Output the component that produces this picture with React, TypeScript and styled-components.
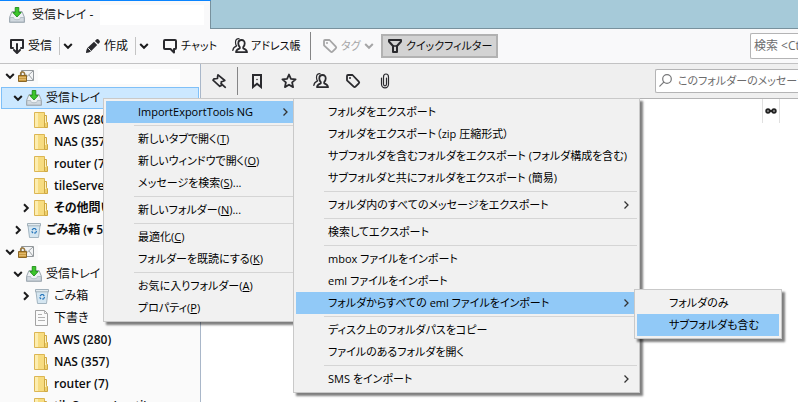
import React from "react";
import styled, { createGlobalStyle, css } from "styled-components";

const GlobalStyle = createGlobalStyle`
  * { box-sizing: border-box; }
  html, body, #root { height: 100%; }
  body {
    margin: 0;
    overflow: hidden;
    background: #fff;
    color: #0c0c0d;
    font-family: "Open Sans", "Noto Sans CJK JP", sans-serif;
    font-size: 12px;
    line-height: 16px;
    font-feature-settings: "palt";
  }
  button, input { font: inherit; font-feature-settings: inherit; color: inherit; }
  button { background: none; border: 0; padding: 0; white-space: nowrap; }
  ul { list-style: none; margin: 0; padding: 0; }
  svg { display: block; flex: none; }
`;

const Window = styled.div`
  display: flex;
  flex-direction: column;
  height: 100%;
  overflow: hidden;
`;

const TabStrip = styled.div`
  display: flex;
  height: 29px;
  background: #a6cad9;
`;

const Tab = styled.button`
  display: flex;
  align-items: center;
  gap: 7px;
  width: 211px;
  padding: 0 6px 0 9px;
  background: #f9f9fa;
  border-top: 1px solid #0a84ff;
  border-right: 1px solid #78919d;
`;

const TabStripRest = styled.div`
  flex: 1;
  border-bottom: 1px solid #78919d;
`;

const Blank = styled.span<{ $tall?: boolean }>`
  flex: 1;
  height: ${(p) => (p.$tall ? 20 : 15)}px;
  background: #fff;
`;

const Toolbar = styled.div`
  display: flex;
  align-items: center;
  height: 35px;
  padding-left: 9px;
  background: #f9f9fa;
  border-bottom: 1px solid #c2c2c3;
`;

const ToolButton = styled.button<{ $w: number; $dim?: boolean; $small?: boolean }>`
  display: flex;
  align-items: center;
  gap: 3px;
  width: ${(p) => p.$w}px;
  height: 24px;
  flex: none;
  ${(p) => p.$small && css`font-size: 11px;`}
  ${(p) => p.$dim && css`color: #a5a5a6;`}
`;

const ToggleButton = styled.button`
  display: flex;
  align-items: center;
  gap: 3px;
  flex: none;
  height: 24px;
  padding: 0 4px;
  font-size: 11px;
  background: #d3d3d3;
  border: 2px solid #b2b2b2;
`;

const Divider = styled.span<{ $tall?: boolean; $gap: number }>`
  flex: none;
  width: 1px;
  height: ${(p) => (p.$tall ? 28 : 18)}px;
  margin-right: ${(p) => p.$gap}px;
  background: ${(p) => (p.$tall ? "#858586" : "#c4c4c4")};
`;

const SearchBox = styled.label<{ $w: number; $small?: boolean }>`
  display: flex;
  align-items: center;
  gap: 3px;
  flex: none;
  width: ${(p) => p.$w}px;
  height: ${(p) => (p.$small ? 24 : 26)}px;
  margin-left: auto;
  padding-left: 3px;
  font-size: ${(p) => (p.$small ? 11 : 12)}px;
  background: #fff;
  border: 1px solid #b4b4b5;
  border-right: 0;
  border-radius: 2px 0 0 2px;
  input {
    flex: 1;
    min-width: 0;
    padding: 0;
    border: 0;
    outline: 0;
    background: none;
  }
  input::placeholder { color: #6c6c6d; opacity: 1; }
`;

const Panes = styled.div`
  display: flex;
  flex: 1;
  min-height: 0;
`;

const Tree = styled.ul`
  flex: none;
  width: 201px;
  padding: 1px 1px 0 1px;
  overflow: hidden;
  background: #fafafa;
  border-right: 1px solid #a9b7c9;
`;

const TreeRow = styled.button<{ $level: number; $bold?: boolean; $selected?: boolean }>`
  display: flex;
  align-items: center;
  width: 198px;
  height: 22px;
  padding-left: ${(p) => 2 + p.$level * 8}px;
  padding-right: 18px;
  font-weight: ${(p) => (p.$bold ? 600 : 400)};
  border: 1px solid ${(p) => (p.$selected ? "#7fc0f8" : "transparent")};
  background: ${(p) => (p.$selected ? "#cce8ff" : "transparent")};
`;

const Twisty = styled.span`
  display: flex;
  justify-content: center;
  flex: none;
  width: 12px;
  margin-right: 2px;
`;

const TreeIcon = styled.span`
  flex: none;
  width: 16px;
  margin-right: 4px;
`;

const Content = styled.main`
  flex: 1;
  min-width: 0;
`;

const FilterBar = styled.div`
  display: flex;
  align-items: center;
  height: 35px;
  padding-left: 10px;
  background: #efefef;
  border-bottom: 1px solid #b3b3b4;
`;

const FilterIcons = styled.div`
  display: flex;
  gap: 16px;
`;

const ColumnHeader = styled.div`
  display: flex;
  justify-content: flex-end;
  height: 24px;
  padding-right: 18px;
`;

const ThreadColumn = styled.button`
  display: flex;
  align-items: center;
  justify-content: center;
  width: 18px;
  border-left: 1px solid #e0e0e0;
  border-right: 1px solid #e0e0e0;
`;

const MenuList = styled.ul<{ $w: number }>`
  position: absolute;
  z-index: 1;
  width: ${(p) => p.$w}px;
  padding: 2px;
  font-size: 11px;
  background: #f1f1f1;
  border: 1px solid #c9c9c9;
  box-shadow: 3px 3px 2px rgba(0, 0, 0, 0.5);
`;

const ContextMenu = styled(MenuList)`
  left: 103px;
  top: 98px;
`;

const SubMenu = styled(MenuList)`
  left: calc(100% - 3px);
  top: -3px;
`;

const MenuItem = styled.li`
  position: relative;
`;

const MenuButton = styled.button<{ $active?: boolean }>`
  display: flex;
  align-items: center;
  justify-content: space-between;
  width: 100%;
  height: 22px;
  padding: 0 6px 0 32px;
  color: #000;
  background: ${(p) => (p.$active ? "#91c9f7" : "transparent")};
`;

const Separator = styled.li`
  height: 5px;
  padding: 2px 0 2px 28px;
  &::before {
    content: "";
    display: block;
    height: 1px;
    background: #d5d5d5;
  }
`;

const Chevron = ({ dir = "down", color = "#1b1b1c", thin = false }: { dir?: "down" | "right"; color?: string; thin?: boolean }) => (
  <svg width="10" height="10" viewBox="0 0 10 10" fill="none" stroke={color} strokeWidth={thin ? 1.3 : 2}>
    <path d={dir === "down" ? "M1.2 3 5 6.8 8.8 3" : thin ? "M3.5 1.5 7 5 3.5 8.5" : "M3 1.2 6.8 5 3 8.8"} />
  </svg>
);

const Glyph = ({ children, color = "#2a2a2e" }: { children: React.ReactNode; color?: string }) => (
  <svg width="16" height="16" viewBox="0 0 16 16" fill="none" stroke={color} strokeWidth="2" strokeLinejoin="round" strokeLinecap="round">
    {children}
  </svg>
);

const GetMailIcon = () => (
  <Glyph>
    <path d="M4 10H2V2h12v8h-2M8 6v8.500M5 12l3 3 3-3" />
  </Glyph>
);
const PencilIcon = () => (
  <Glyph>
    <path stroke="none" fill="#2a2a2e" d="M1 15c0-2 .7-4 1.6-5.200L9 3.800 12.200 7 6 13.300C4.700 14.300 3 15 1 15ZM9.900 2.900l1.200-1.200c.8-.8 1.800-.8 2.500-.1l.8.800c.7.700.7 1.700-.1 2.500L13.100 6.100Z" />
    <path stroke="#f9f9fa" strokeWidth="1" d="m3.500 10.500 2 2" />
  </Glyph>
);
const ChatIcon = () => (
  <Glyph>
    <path d="M3 2h10a1 1 0 0 1 1 1v7a1 1 0 0 1-1 1h-1v3.500L8.500 11H3a1 1 0 0 1-1-1V3a1 1 0 0 1 1-1Z" />
  </Glyph>
);
const PeopleIcon = () => (
  <Glyph>
    <path strokeWidth="1.800" d="M9.500 2C7.300 2 6.300 3.600 6.300 5.500c0 1.600.7 2.800 1.500 3.600v1.200c-2 .5-3.500 1.400-3.800 3.900h11c-.3-2.500-1.800-3.400-3.800-3.900V9.100c.8-.8 1.500-2 1.500-3.600C12.700 3.600 11.700 2 9.500 2Z" />
    <path strokeWidth="1.200" d="M7 .7C4.500.7 3.500 2.500 3.500 4.500c0 1.500.5 2.600 1.100 3.400C2.500 8.800 1 10 .8 12.500" />
  </Glyph>
);
const TagIcon = ({ color }: { color?: string }) => (
  <Glyph color={color}>
    <path strokeWidth="1.800" d="M2 3v4.300L8.700 13.700a1.300 1.300 0 0 0 1.800 0l3.300-3.300a1.300 1.300 0 0 0 0-1.800L7.500 2H3a1 1 0 0 0-1 1Z" />
    <circle cx="5" cy="5" r="1" stroke="none" fill={color ?? "#2a2a2e"} />
  </Glyph>
);
const FunnelIcon = () => (
  <Glyph>
    <path d="M2 2h12v1.500L10 8v6H6V8L2 3.500Z" />
    <path d="M6 8h4" strokeWidth="1.500" />
  </Glyph>
);
const PinIcon = () => (
  <Glyph>
    <path strokeWidth="1.700" d="M7 1.800 13.800 7.500 12 8.300 10.300 8.800 10.300 12.500 8.800 13.300 2 7.200 3 5.800 6.500 5.500 6.600 3.500ZM10 10.500 14.300 14.300" />
  </Glyph>
);
const BookmarkIcon = () => (
  <Glyph>
    <path strokeLinejoin="miter" d="M4 2h8v12l-4-3.300L4 14Z" />
    <path strokeWidth="1.500" d="M8 6.500v.1" />
  </Glyph>
);
const StarIcon = () => (
  <Glyph>
    <path strokeWidth="1.800" d="m8 1.500 1.900 4.300 4.700.5-3.500 3.100 1 4.700L8 11.700l-4.100 2.400 1-4.700L1.400 6.300l4.700-.5Z" />
  </Glyph>
);
const ClipIcon = () => (
  <Glyph>
    <path strokeWidth="1.200" d="M4.500 5v6a3.500 3.900 0 0 0 7 0V4a2.500 3 0 0 0-5 0v7a1.500 1.800 0 0 0 3 0V5" />
  </Glyph>
);
const SearchIcon = () => (
  <Glyph color="#77787a">
    <circle cx="8" cy="6" r="4.300" strokeWidth="1.200" />
    <path strokeWidth="1.200" d="m4.800 9.200-4 4" />
  </Glyph>
);

const InboxIcon = () => (
  <svg width="16" height="16" viewBox="0 0 16 16">
    <path d="M3 4.500h10l2.500 6v4.800H.5v-4.800Z" fill="#edf1f4" stroke="#9aa5ad" />
    <path d="M.9 10.500h3.600c0 3 7 3 7 0h3.600v4.300H.9Z" fill="#d1d9df" stroke="#a4afb7" strokeWidth=".7" />
    <path d="M6.200 .5h3.600v5h2.400L8 10 3.800 5.500h2.400Z" fill="#3cc52c" stroke="#13850e" strokeWidth=".8" />
  </svg>
);
const FolderIcon = () => (
  <svg width="16" height="16" viewBox="0 0 16 16">
    <path d="M.5.5h10v15H.5Z" fill="#f7dc80" stroke="#dcb653" />
    <path d="M10.500 3.500h2v6l1 1v5h-3Z" fill="#eed06c" stroke="#cfa843" />
    <path d="M1 1h3v14H1Z" fill="#fcedb0" />
    <path d="M11.500 4v7" stroke="#fff3bd" />
  </svg>
);
const AccountIcon = () => (
  <svg width="16" height="16" viewBox="0 0 16 16">
    <path d="M3.500 2.500h12v10h-12Z" fill="#f3f4f5" stroke="#92979b" />
    <path d="m4 3 5.500 5L15 3M8 7l-4 5M11 7l4 5" fill="none" stroke="#92979b" strokeWidth=".9" />
    <path d="M2.500 8V6a2 2 0 0 1 4 0v2" fill="none" stroke="#9a783c" strokeWidth="1.300" />
    <path d="M.5 7.500h8v6h-8Z" fill="#c99a40" stroke="#8b6625" />
    <path d="M1 9.500h7M1 11.500h7" stroke="#e7c277" strokeWidth=".8" />
  </svg>
);
const TrashIcon = () => (
  <svg width="16" height="16" viewBox="0 0 16 16">
    <path d="M1.800 2h12.400l-1.700 13.500h-9Z" fill="#d5e6f1" stroke="#a3b5c1" />
    <path d="M1.500 1.500h13v2.300h-13Z" fill="#e3ebf0" stroke="#93a3ae" strokeWidth=".8" />
    <path d="m6 8 1.500-1.500H9L10.300 8M10.600 9l-1 2H8M7 11 5.600 9.300" fill="none" stroke="#2877bc" strokeWidth="1.200" />
  </svg>
);
const DraftIcon = () => (
  <svg width="16" height="16" viewBox="0 0 16 16">
    <path d="M1.500.5h9l3 3v12h-12Z" fill="#fafafa" stroke="#a2a2a2" />
    <path d="M10.500.5v3h3M4 4.500h4M4 7.500h7M4 10.500h7" fill="none" stroke="#b2b2b2" />
  </svg>
);
const ThreadIcon = () => (
  <svg width="12" height="8" viewBox="0 0 12 8" fill="none" stroke="#222" strokeWidth="2">
    <circle cx="3" cy="4" r="1.700" />
    <circle cx="9" cy="4" r="1.700" />
    <path d="M4.500 4h3" />
  </svg>
);

const icons = { account: AccountIcon, inbox: InboxIcon, folder: FolderIcon, trash: TrashIcon, draft: DraftIcon };

type Row = {
  icon: keyof typeof icons;
  level: number;
  label?: string;
  open?: boolean;
  bold?: boolean;
  selected?: boolean;
};

const rows: Row[] = [
  { icon: "account", level: 0, open: true },
  { icon: "inbox", level: 1, label: "受信トレイ", open: true, selected: true },
  { icon: "folder", level: 2, label: "AWS (280)", bold: true },
  { icon: "folder", level: 2, label: "NAS (357)", bold: true },
  { icon: "folder", level: 2, label: "router (7)", bold: true },
  { icon: "folder", level: 2, label: "tileServer", bold: true },
  { icon: "folder", level: 2, label: "その他問い", open: false, bold: true },
  { icon: "trash", level: 1, label: "ごみ箱 (▾ 5", open: false, bold: true },
  { icon: "account", level: 0, open: true },
  { icon: "inbox", level: 1, label: "受信トレイ", open: true },
  { icon: "trash", level: 2, label: "ごみ箱", open: false },
  { icon: "draft", level: 2, label: "下書き" },
  { icon: "folder", level: 2, label: "AWS (280)", bold: true },
  { icon: "folder", level: 2, label: "NAS (357)", bold: true },
  { icon: "folder", level: 2, label: "router (7)", bold: true },
  { icon: "folder", level: 2, label: "tileServer (cacti)", bold: true },
];

type Entry = null | { text: string; accessKey?: string; tail?: string; arrow?: boolean; sub?: Entry[]; subWidth?: number };

const importMenu: Entry[] = [{ text: "フォルダのみ" }, { text: "サブフォルダも含む" }];

const toolsMenu: Entry[] = [
  { text: "フォルダをエクスポート" },
  { text: "フォルダをエクスポート（zip 圧縮形式）" },
  { text: "サブフォルダを含むフォルダをエクスポート (フォルダ構成を含む)" },
  { text: "サブフォルダと共にフォルダをエクスポート (簡易)" },
  null,
  { text: "フォルダ内のすべてのメッセージをエクスポート", arrow: true },
  null,
  { text: "検索してエクスポート" },
  null,
  { text: "mbox ファイルをインポート" },
  { text: "eml ファイルをインポート" },
  { text: "フォルダからすべての eml ファイルをインポート", arrow: true, sub: importMenu, subWidth: 148 },
  null,
  { text: "ディスク上のフォルダパスをコピー" },
  { text: "ファイルのあるフォルダを開く" },
  null,
  { text: "SMS をインポート", arrow: true },
];

const folderMenu: Entry[] = [
  { text: "ImportExportTools NG", arrow: true, sub: toolsMenu, subWidth: 347 },
  null,
  { text: "新しいタブで開く", accessKey: "T" },
  { text: "新しいウィンドウで開く", accessKey: "O" },
  { text: "メッセージを検索", accessKey: "S", tail: "..." },
  null,
  { text: "新しいフォルダー", accessKey: "N", tail: "..." },
  null,
  { text: "最適化", accessKey: "C" },
  { text: "フォルダーを既読にする", accessKey: "K" },
  null,
  { text: "お気に入りフォルダー", accessKey: "A" },
  { text: "プロパティ", accessKey: "P" },
];

const Entries = ({ items }: { items: Entry[] }) => (
  <>
    {items.map((it, i) =>
      it === null ? (
        <Separator key={i} role="separator" />
      ) : (
        <MenuItem key={i} role="none">
          <MenuButton role="menuitem" $active={!!it.sub || it.text === "サブフォルダも含む"}>
            <span>
              {it.text}
              {it.accessKey && <>(<u>{it.accessKey}</u>){it.tail}</>}
            </span>
            {it.arrow && <Chevron dir="right" thin color="#333" />}
          </MenuButton>
          {it.sub && (
            <SubMenu role="menu" $w={it.subWidth ?? 148}>
              <Entries items={it.sub} />
            </SubMenu>
          )}
        </MenuItem>
      )
    )}
  </>
);

export default function App() {
  return (
    <Window>
      <GlobalStyle />
      <TabStrip>
        <Tab>
          <InboxIcon />
          <span>受信トレイ -</span>
          <Blank $tall />
        </Tab>
        <TabStripRest />
      </TabStrip>
      <Toolbar>
        <ToolButton $w={50}><GetMailIcon />受信</ToolButton>
        <Divider $gap={3} />
        <ToolButton $w={22} aria-label="受信メニュー"><Chevron /></ToolButton>
        <ToolButton $w={50}><PencilIcon />作成</ToolButton>
        <Divider $gap={3} />
        <ToolButton $w={23} aria-label="作成メニュー"><Chevron /></ToolButton>
        <ToolButton $w={70} $small><ChatIcon />チャット</ToolButton>
        <ToolButton $w={78} $small><PeopleIcon />アドレス帳</ToolButton>
        <Divider $tall $gap={11} />
        <ToolButton $w={59} $dim $small disabled>
          <TagIcon color="#a5a5a6" />タグ<Chevron color="#a5a5a6" />
        </ToolButton>
        <ToggleButton aria-pressed="true"><FunnelIcon />クイックフィルター</ToggleButton>
        <SearchBox $w={48}>
          <input aria-label="検索" placeholder="検索 <Ctrl+K>" />
        </SearchBox>
      </Toolbar>
      <Panes>
        <Tree>
          {rows.map((r, i) => {
            const Icon = icons[r.icon];
            return (
              <li key={i}>
                <TreeRow $level={r.level} $bold={r.bold} $selected={r.selected}>
                  <Twisty>{r.open !== undefined && <Chevron dir={r.open ? "down" : "right"} />}</Twisty>
                  <TreeIcon><Icon /></TreeIcon>
                  {r.label ?? <Blank />}
                </TreeRow>
              </li>
            );
          })}
        </Tree>
        <Content>
          <FilterBar>
            <ToolButton $w={26} aria-label="ピン留め"><PinIcon /></ToolButton>
            <Divider $tall $gap={11} />
            <FilterIcons>
              <ToolButton $w={16} aria-label="未読"><BookmarkIcon /></ToolButton>
              <ToolButton $w={16} aria-label="スター"><StarIcon /></ToolButton>
              <ToolButton $w={16} aria-label="連絡先"><PeopleIcon /></ToolButton>
              <ToolButton $w={16} aria-label="タグ付き"><TagIcon /></ToolButton>
              <ToolButton $w={16} aria-label="添付"><ClipIcon /></ToolButton>
            </FilterIcons>
            <SearchBox $w={143} $small>
              <SearchIcon />
              <input aria-label="フィルター" placeholder="このフォルダーのメッセージを絞り込む" />
            </SearchBox>
          </FilterBar>
          <ColumnHeader>
            <ThreadColumn aria-label="スレッド"><ThreadIcon /></ThreadColumn>
          </ColumnHeader>
        </Content>
      </Panes>
      <ContextMenu role="menu" $w={196}>
        <Entries items={folderMenu} />
      </ContextMenu>
    </Window>
  );
}
